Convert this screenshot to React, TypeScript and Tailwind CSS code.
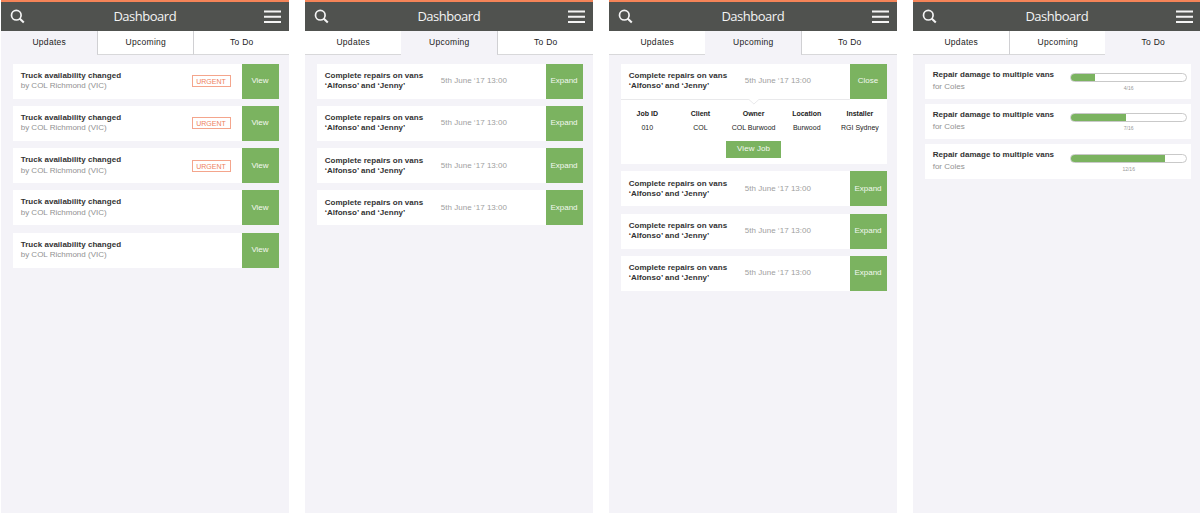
import React from "react";

const TABS = ["Updates", "Upcoming", "To Do"];

function Header() {
  return (
    <header className="flex h-[31px] shrink-0 items-center justify-between border-t-2 border-[#f58458] bg-[#50524f] pl-[9px] pr-2">
      <svg className="h-[15px] w-[15px]" viewBox="0 0 15 15" fill="none" stroke="#f4f4f4">
        <circle cx="6.3" cy="6.2" r="4.8" strokeWidth="1.7" />
        <path d="M9.6 9.6 L13.8 13.5" strokeWidth="2.1" />
      </svg>
      <h1 className="pb-px font-['Open_Sans',sans-serif] text-[13px] leading-[27px] tracking-[-0.48px] text-[#f4f4f4]">
        Dashboard
      </h1>
      <svg className="h-[14px] w-[17px]" viewBox="0 0 17 14" fill="none" stroke="#f4f4f4" strokeWidth="2">
        <path d="M0 1.4H17M0 6.7H17M0 12H17" />
      </svg>
    </header>
  );
}

function Tabs({ active }: { active: number }) {
  return (
    <nav className="grid h-[23.5px] shrink-0 grid-cols-3 text-center text-[8.5px] leading-[22px] tracking-[0.3px] text-[#222]">
      {TABS.map((tab, i) => (
        <div
          key={tab}
          className={`${i === active ? "bg-[#f4f3f8]" : "border-b border-[#d8d8da] bg-white"} ${
            i > 0 && i !== active ? "border-l border-l-[#d0d0d3]" : ""
          }`}
        >
          {tab}
        </div>
      ))}
    </nav>
  );
}

function Phone({ active, children }: { active: number; children: React.ReactNode }) {
  return (
    <section className="flex h-[513px] w-72 shrink-0 flex-col bg-[#f4f3f8]">
      <Header />
      <Tabs active={active} />
      <div className="flex flex-col pl-[11.4px] pr-[10.8px] pt-[9px]">{children}</div>
    </section>
  );
}

function Action({ label }: { label: string }) {
  return (
    <button className="h-full w-[37px] shrink-0 bg-[#7bb360] text-center text-[8px] leading-[34px] text-[#f3f8f0]">
      {label}
    </button>
  );
}

function UpdateCard({ urgent }: { urgent: boolean }) {
  return (
    <article className="mb-[7.3px] flex h-[35px] items-center bg-white pl-2">
      <div className="flex-1 whitespace-nowrap text-[8px] leading-[10.5px]">
        <p className="font-bold tracking-[0.03px] text-[#333]">Truck availability changed</p>
        <p className="text-[#929292]">by COL Richmond (VIC)</p>
      </div>
      {urgent && (
        <span className="mr-[11px] h-3 w-[39px] border border-[#f4a58c] text-center text-[7px] leading-[11px] text-[#ee8160]">
          URGENT
        </span>
      )}
      <Action label="View" />
    </article>
  );
}

function JobRow({ action }: { action: string }) {
  return (
    <div className="flex h-[35px] items-center bg-white pl-2">
      <p className="w-[116px] whitespace-nowrap text-[8px] font-bold leading-[10px] tracking-[0.03px] text-[#333]">
        Complete repairs on vans
        <br />
        ‘Alfonso’ and ‘Jenny’
      </p>
      <p className="flex-1 whitespace-nowrap text-[8px] leading-[34px] tracking-[0.03px] text-[#a0a0a0]">
        5th June ‘17 13:00
      </p>
      <Action label={action} />
    </div>
  );
}

const DETAILS = [
  ["Job ID", "010"],
  ["Client", "COL"],
  ["Owner", "COL Burwood"],
  ["Location", "Burwood"],
  ["Installer", "RGI Sydney"],
];

function JobDetails() {
  return (
    <div className="flex h-[65.5px] flex-col items-center bg-white">
      <svg className="h-[6px] w-full shrink-0" viewBox="0 0 266 6" fill="none" stroke="#e3e3e6" strokeWidth="0.8">
        <path d="M0 0.5H128L133 5L138 0.5H229" />
      </svg>
      <dl className="grid w-full grid-cols-5 text-center text-[7px] text-[#222]">
        {DETAILS.map(([name, value]) => (
          <div key={name} className="whitespace-nowrap">
            <dt className="mt-1 h-[14.5px] font-bold leading-[10px]">{name}</dt>
            <dd className="leading-[10px]">{value}</dd>
          </div>
        ))}
      </dl>
      <button className="mt-[7.5px] h-[17px] w-[54.5px] bg-[#7bb360] text-[8px] leading-[16px] tracking-[0.1px] text-[#f3f8f0]">
        View Job
      </button>
    </div>
  );
}

function TodoCard({ done, percent }: { done: number; percent: number }) {
  return (
    <article className="mb-[5.4px] flex h-[35px] bg-white pl-2">
      <div className="w-[137.5px] shrink-0 whitespace-nowrap pt-[5px] text-[8px]">
        <p className="font-bold leading-[12px] tracking-[0.03px] text-[#333]">Repair damage to multiple vans</p>
        <p className="leading-[12px] text-[#929292]">for Coles</p>
      </div>
      <div className="w-[117px] shrink-0 pt-[9.5px]">
        <div className="relative h-[9px] overflow-hidden rounded-full border border-[#c9c9c9]">
          <div className="absolute -inset-y-px -left-px bg-[#7bb360]" style={{ width: `${percent}%` }} />
        </div>
        <p className="mt-[2px] text-center text-[5px] leading-[8px] text-[#999]">{done}/16</p>
      </div>
    </article>
  );
}

export default function App() {
  return (
    <main className="flex h-[514px] w-[1200px] gap-4 overflow-hidden bg-white pl-[1.3px] font-['Liberation_Sans',Arial,sans-serif]">
      <Phone active={0}>
        {[true, true, true, false, false].map((urgent, i) => (
          <UpdateCard key={i} urgent={urgent} />
        ))}
      </Phone>
      <Phone active={1}>
        {[0, 1, 2, 3].map((i) => (
          <article key={i} className="mb-[7.3px]">
            <JobRow action="Expand" />
          </article>
        ))}
      </Phone>
      <Phone active={1}>
        <article className="mb-[7.3px]">
          <JobRow action="Close" />
          <JobDetails />
        </article>
        {[0, 1, 2].map((i) => (
          <article key={i} className="mb-[7.3px]">
            <JobRow action="Expand" />
          </article>
        ))}
      </Phone>
      <Phone active={2}>
        <TodoCard done={4} percent={21.8} />
        <TodoCard done={7} percent={48.2} />
        <TodoCard done={12} percent={82.8} />
      </Phone>
    </main>
  );
}
